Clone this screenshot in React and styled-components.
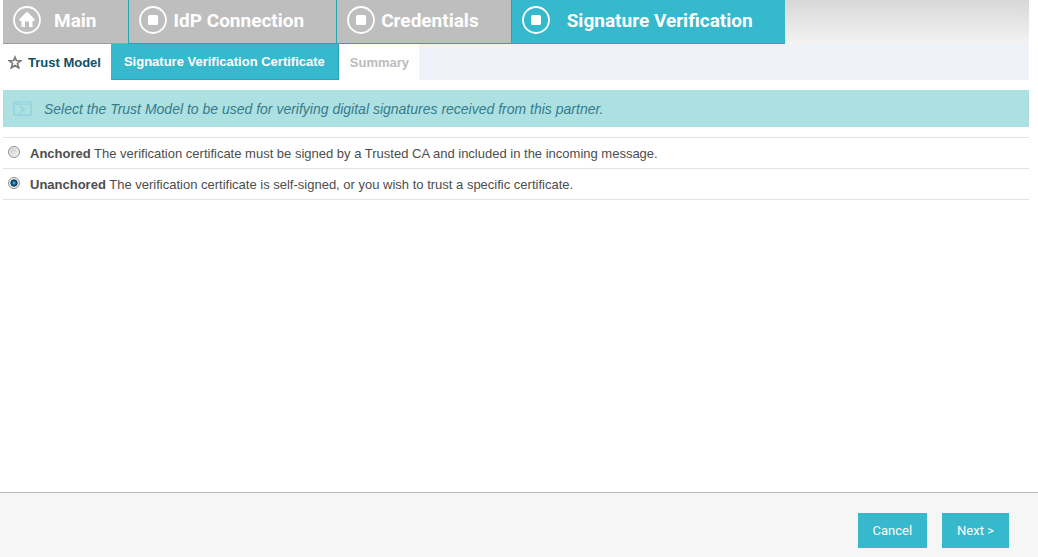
import React, { useState } from 'react';
import styled, { createGlobalStyle } from 'styled-components';

const GlobalStyle = createGlobalStyle`
    * {
        box-sizing:border-box;
    }

    body {
        margin:0;
        background-color:#fff;
        color:#4d4d4d;
        font-family:Arial, 'Liberation Sans', sans-serif;
        font-size:13px;
    }
`

const PageWrapper = styled.div`
    min-height:100vh;
    display:flex;
    flex-direction:column;
`

const Content = styled.main`
    flex:1;
    padding:0 9px 0 3px;
`

//---------------------------------------Main tabs---------------------------------------//

const MainTabs = styled.nav`
    display:flex;
    height:44px;
    background:linear-gradient(#d8d8d8, #f3f3f4);
`

const MainTab = styled.a`
    display:flex;
    align-items:center;
    gap:${props => props.$gap || '6px'};
    padding:0 32px 3px 10px;
    border:solid ${props => props.$first ? '#9d9d9d' : '#26a5b8'};
    border-width:${props => props.$first ? '0 0 1px' : '0 0 1px 1px'};
    background-color:${props => props.$active ? '#36b8cd' : '#bebebe'};
    color:#fff;
    font-family:Roboto, sans-serif;
    font-size:19px;
    font-weight:700;
    white-space:nowrap;
    text-decoration:none;

    svg {
        flex:none;
    }
`

//---------------------------------------Sub tabs---------------------------------------//

const SubTabs = styled.nav`
    display:flex;
    height:36px;
    background-color:#eff2f8;
`

const SubTab = styled.a`
    display:flex;
    align-items:center;
    gap:6px;
    padding:0 10px 0 ${props => props.$icon ? '5px' : '11px'};
    background-color:#fff;
    color:${props => props.$disabled ? '#bcbcbc' : '#0e5266'};
    font-weight:700;
    white-space:nowrap;
    text-decoration:none;
`

const FilledSubTab = styled(SubTab)`
    border:solid #26a5b8;
    border-width:0 1px 1px 0;
    padding:0 13px;
    background-color:#36b8cd;
    color:#fff;
`

//---------------------------------------Body---------------------------------------//

const Banner = styled.p`
    display:flex;
    align-items:center;
    gap:12px;
    height:37px;
    margin:10px 0;
    padding:0 10px;
    background-color:#ade1e1;
    color:#377a8c;
    font-size:14px;
    font-style:italic;
`

const OptionList = styled.div`
    border-top:1px solid #e3e3e3;
`

const Option = styled.label`
    display:flex;
    align-items:center;
    gap:10px;
    height:31px;
    padding:0 5px;
    border-bottom:1px solid #e3e3e3;
`

const Radio = styled.input`
    appearance:none;
    flex:none;
    width:12px;
    height:12px;
    margin:0 0 3px;
    border:1px solid #8e8f8f;
    border-radius:50%;
    background:linear-gradient(135deg, #c4c8cb, #f6f6f6);
    box-shadow:inset 0 0 0 1px #f4f4f4;

    &:checked {
        background:radial-gradient(circle closest-side, #5cc5ee 0, #14699a 35%, #0b2c46 65%, #e6eaec 80%);
    }
`

const Footer = styled.footer`
    display:flex;
    justify-content:flex-end;
    gap:15px;
    padding:20px 29px 9px;
    border-top:1px solid #b9b9b9;
    background-color:#f6f6f6;
`

const Button = styled.button`
    height:35px;
    padding:0 15px;
    border:none;
    background-color:#36b8cd;
    color:#fff;
    font-family:Roboto, sans-serif;
    font-size:13px;
`

const HomeIcon = () => (
    <svg width="28" height="28" viewBox="0 0 28 28" aria-hidden="true">
        <circle cx="14" cy="14" r="13" fill="none" stroke="#fff" strokeWidth="1.8" />
        <path d="M14 5.5 L22 13.5 L21 15 H19.5 V21 H16 V15.5 H12 V21 H8.5 V15 H7 L6 13.5 Z" fill="#fff" />
    </svg>
)

const StepIcon = () => (
    <svg width="28" height="28" viewBox="0 0 28 28" aria-hidden="true">
        <circle cx="14" cy="14" r="13" fill="none" stroke="#fff" strokeWidth="1.8" />
        <rect x="9" y="9" width="10" height="10" rx="1.5" fill="#fff" />
    </svg>
)

const StarIcon = () => (
    <svg width="14" height="14" viewBox="0 0 14 14" aria-hidden="true">
        <path d="M7 2.2 L8.4 5.6 L12.6 5.8 L9.4 8.5 L10.8 12.9 L7 10.5 L3.2 12.9 L4.6 8.5 L1.4 5.8 L5.6 5.6 Z" fill="none" stroke="#777" strokeWidth="1.6" />
    </svg>
)

const PromptIcon = () => (
    <svg width="19" height="15" viewBox="0 0 19 15" aria-hidden="true">
        <path d="M1 0 H18 L19 1 V14 L18 15 H1 L0 14 V1 Z M2 4 V13 H17 V4 Z M2 1.5 V2.5 H3 V1.5 Z M4 1.5 V2.5 H5 V1.5 Z M6 1.5 V2.5 H17 V1.5 Z" fill="#98d5e0" fillRule="evenodd" />
        <path d="M7 5.5 L11 8.7 L7 12" fill="none" stroke="#98d5e0" strokeWidth="2" />
    </svg>
)

const options = [
    { name:'Anchored', text:'The verification certificate must be signed by a Trusted CA and included in the incoming message.' },
    { name:'Unanchored', text:'The verification certificate is self-signed, or you wish to trust a specific certificate.' },
]

const App = () =>{

    const [model, setModel] = useState('Unanchored')

    return(
        <PageWrapper>
            <GlobalStyle />
            <Content>
                <MainTabs>
                    <MainTab href="#main" $first $gap="13px"><HomeIcon />Main</MainTab>
                    <MainTab href="#idp"><StepIcon />IdP Connection</MainTab>
                    <MainTab href="#credentials"><StepIcon />Credentials</MainTab>
                    <MainTab href="#signature" $active $gap="17px"><StepIcon />Signature Verification</MainTab>
                </MainTabs>

                <SubTabs>
                    <SubTab href="#trust" $icon><StarIcon />Trust Model</SubTab>
                    <FilledSubTab href="#certificate">Signature Verification Certificate</FilledSubTab>
                    <SubTab href="#summary" $disabled>Summary</SubTab>
                </SubTabs>

                <Banner>
                    <PromptIcon />
                    Select the Trust Model to be used for verifying digital signatures received from this partner.
                </Banner>

                <OptionList role="radiogroup" aria-label="Trust Model">
                    {options.map(option => (
                        <Option key={option.name}>
                            <Radio
                             type="radio"
                             name="trustModel"
                             checked={model === option.name}
                             onChange={() => setModel(option.name)}
                            />
                            <span><b>{option.name}</b> {option.text}</span>
                        </Option>
                    ))}
                </OptionList>
            </Content>

            <Footer>
                <Button type="button">Cancel</Button>
                <Button type="button">Next &gt;</Button>
            </Footer>
        </PageWrapper>
    );
}

export default App;
